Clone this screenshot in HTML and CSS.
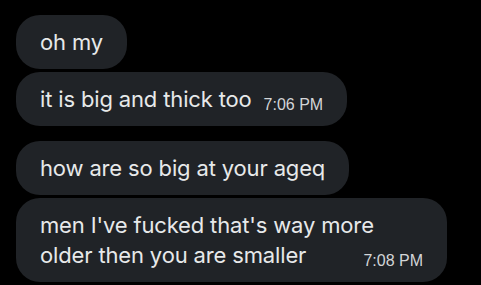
FILE: index.html
```html
<!DOCTYPE html>
<html lang="en">

<head>
    <meta charset="UTF-8">
    <title>Messages</title>
    <link rel="stylesheet" href="styles.css">
</head>

<body>

    <section class="chat">

        <div class="gruppe">
            <p class="boble">oh my</p>
            <p class="boble">it is big and thick too<span class="tid">7:06 PM</span></p>
        </div>

        <div class="gruppe">
            <p class="boble">how are so big at your ageq</p>
            <p class="boble">men I've fucked that's way more older then you are smaller<span class="tid">7:08 PM</span></p>
        </div>

    </section>

</body>

</html>
```

FILE: styles.css
```css
body {
    margin: 0;
    background-color: #000;
    font-family: "Inter", "Noto Sans", sans-serif;
}

.chat {
    display: flex;
    flex-direction: column;
    gap: 15px;
    padding: 15px 16px 3px;
}

.gruppe {
    display: flex;
    flex-direction: column;
    align-items: flex-start;
    gap: 3px;
}

.boble {
    margin: 0;
    max-width: 383px;
    padding: 12px 24px;
    border-radius: 24px;
    background-color: #202327;
    color: #e7e9ea;
    font-size: 22px;
    line-height: 30px;
    letter-spacing: -0.15px;
}

.tid {
    float: right;
    margin-left: 12px;
    padding-top: 13px;
    font-family: "Liberation Sans", Arial, sans-serif;
    font-size: 16px;
    line-height: 16px;
    letter-spacing: 0;
    color: #d3d5d7;
}
```
